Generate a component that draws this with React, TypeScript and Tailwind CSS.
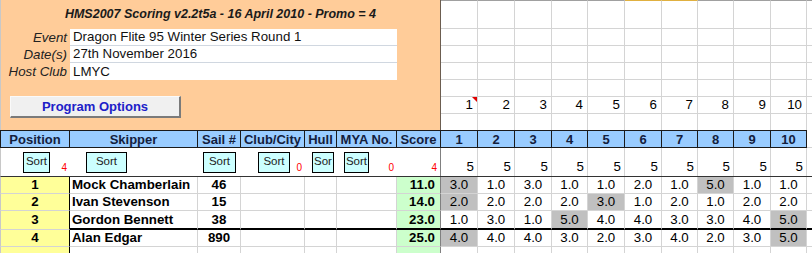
const raceW = ['w-[37px]', 'w-[37px]', 'w-[37px]', 'w-[36px]', 'w-[37px]', 'w-[37px]', 'w-[36px]', 'w-[36px]', 'w-[37px]', 'w-[36px]']

const rows = [
  { pos: 1, name: 'Mock Chamberlain', sail: '46', score: '11.0', r: ['3.0', '1.0', '3.0', '1.0', '1.0', '2.0', '1.0', '5.0', '1.0', '1.0'], gray: [0, 7] },
  { pos: 2, name: 'Ivan Stevenson', sail: '15', score: '14.0', r: ['2.0', '2.0', '2.0', '2.0', '3.0', '1.0', '2.0', '1.0', '2.0', '2.0'], gray: [0, 4] },
  { pos: 3, name: 'Gordon Bennett', sail: '38', score: '23.0', r: ['1.0', '3.0', '1.0', '5.0', '4.0', '4.0', '3.0', '3.0', '4.0', '5.0'], gray: [3, 9] },
  { pos: 4, name: 'Alan Edgar', sail: '890', score: '25.0', r: ['4.0', '4.0', '4.0', '3.0', '2.0', '3.0', '4.0', '2.0', '3.0', '5.0'], gray: [0, 9] },
]

function SortBtn({ w, label = 'Sort' }: { w: string; label?: string }) {
  return (
    <div className={`${w} h-[21px] shrink-0 overflow-hidden whitespace-nowrap border border-black bg-[#ccffff] text-[11.5px] text-[#222] flex items-center justify-center`}>
      {label}
    </div>
  )
}

function Red({ n }: { n: string }) {
  return <span className="ml-auto self-end pb-[3px] pr-[3px] text-[10px] leading-none text-[#ff0000]">{n}</span>
}

function TopGrid() {
  const heights = ['h-[29px]', 'h-[17px]', 'h-[17px]', 'h-[17px]', 'h-[17px]', 'h-[17px]', 'h-[16px]']
  return (
    <div className="flex-1 flex flex-col">
      {heights.map((h, ri) => (
        <div key={ri} className={`flex ${h}`}>
          {raceW.map((w, i) => (
            <div
              key={i}
              className={`${w} relative shrink-0 border-r border-r-[#d4d4d4] ${ri < 6 ? 'border-b border-b-[#d4d4d4]' : ''} ${ri === 0 ? (i === 5 || i === 6 ? 'border-t border-t-[#e0b040]' : 'border-t border-t-[#a0a0a0]') : ''} flex items-center justify-end pr-[4px] text-[13.3px] leading-none`}
            >
              {ri === 5 && i + 1}
              {ri === 5 && i === 0 && (
                <span className="absolute top-0 right-0 w-0 h-0 border-l-[5px] border-l-transparent border-t-[5px] border-t-[#e00000]" />
              )}
            </div>
          ))}
          <div className={`flex-1 ${ri < 6 ? 'border-b border-b-[#d4d4d4]' : ''} ${ri === 0 ? 'border-t border-t-[#a0a0a0]' : ''}`} />
        </div>
      ))}
    </div>
  )
}

function DataRow({ row, thick }: { row: (typeof rows)[number]; thick: boolean }) {
  const bb = thick ? 'border-b-2 border-b-black' : 'border-b border-b-[#d4d4d4]'
  return (
    <div className={`flex ${thick ? 'h-[19px]' : 'h-[17px]'} text-[13.3px] leading-none`}>
      <div className="w-[70px] shrink-0 border-l border-l-[#c8c8c8] border-b border-b-[#d4d4d4] border-r border-r-black bg-[#ffff99] font-bold flex items-center justify-center">
        {row.pos}
      </div>
      <div className={`w-[128px] shrink-0 ${bb} border-r border-r-[#d4d4d4] font-bold flex items-center pl-[2px] whitespace-nowrap`}>
        {row.name}
      </div>
      <div className={`w-[43px] shrink-0 ${bb} border-r border-r-[#d4d4d4] font-bold flex items-center justify-center`}>
        {row.sail}
      </div>
      <div className={`w-[64px] shrink-0 ${bb} border-r border-r-[#d4d4d4]`} />
      <div className={`w-[32px] shrink-0 ${bb} border-r border-r-[#d4d4d4]`} />
      <div className={`w-[60px] shrink-0 ${bb} border-r border-r-[#d4d4d4]`} />
      <div className={`w-[44px] shrink-0 ${bb} border-r border-r-[#808080] bg-[#ccffcc] font-bold flex items-center justify-end pr-[5px]`}>
        {row.score}
      </div>
      {row.r.map((v, i) => (
        <div
          key={i}
          className={`${raceW[i]} shrink-0 ${bb} border-r border-r-[#d4d4d4] ${row.gray.includes(i) ? 'bg-[#c0c0c0]' : ''} flex items-center justify-center`}
        >
          {v}
        </div>
      ))}
      <div className={`flex-1 ${bb}`} />
    </div>
  )
}

export default function App() {
  const heads = [
    { t: 'Position', w: 'w-[70px] border-l' },
    { t: 'Skipper', w: 'w-[128px]' },
    { t: 'Sail #', w: 'w-[43px]' },
    { t: 'Club/City', w: 'w-[64px]' },
    { t: 'Hull', w: 'w-[32px]' },
    { t: 'MYA No.', w: 'w-[60px]' },
    { t: 'Score', w: 'w-[44px]' },
  ]

  return (
    <div className="w-[812px] h-[253px] overflow-hidden bg-white text-black font-['Liberation_Sans',Arial,sans-serif]">
      {/* Top panel */}
      <div className="flex h-[130px]">
        <div className="w-[441px] shrink-0 bg-[#ffcc99] border-l border-l-[#c8c8c8] border-r border-r-[#6b5d50] flex flex-col">
          <div className="h-[29px] flex items-center justify-center text-[12.5px] font-bold italic text-[#1a1a1a]">
            HMS2007 Scoring v2.2t5a - 16 April 2010 - Promo = 4
          </div>
          {[
            ['Event', 'Dragon Flite 95 Winter Series Round 1'],
            ['Date(s)', '27th November 2016'],
            ['Host Club', 'LMYC'],
          ].map(([label, value], i) => (
            <div key={label} className="flex h-[17px] text-[13.3px] leading-none">
              <div className="w-[69px] shrink-0 text-right pr-[3px] italic flex items-center justify-end text-[#222]">{label}</div>
              <div className={`w-[327px] bg-white pl-[3px] flex items-center text-[#111] ${i < 2 ? 'border-b border-b-[#d0d7e0]' : ''}`}>
                {value}
              </div>
            </div>
          ))}
          <button className="mt-[16px] ml-[9px] w-[171px] h-[22px] bg-[#f0f0f0] border-t border-l border-t-[#fafafa] border-l-[#fafafa] border-r-2 border-b-2 border-r-[#7a7a7a] border-b-[#7a7a7a] text-[13px] font-bold text-[#2020c8] flex items-center justify-center">
            Program Options
          </button>
        </div>
        <TopGrid />
      </div>

      {/* Header row */}
      <div className="flex h-[18px] text-[13px] font-bold leading-none text-[#13203d]">
        {heads.map((h) => (
          <div key={h.t} className={`${h.w} shrink-0 bg-[#99ccff] border-y border-r border-[#1a1a1a] flex items-center justify-center whitespace-nowrap`}>
            {h.t}
          </div>
        ))}
        {raceW.map((w, i) => (
          <div key={i} className={`${w} shrink-0 bg-[#99ccff] border-y border-r border-[#1a1a1a] flex items-center justify-center`}>
            {i + 1}
          </div>
        ))}
        <div className="flex-1 border-b border-b-[#d4d4d4]" />
      </div>

      {/* Sort row */}
      <div className="flex h-[29px] border-b border-b-[#333] border-l border-l-[#c8c8c8]">
        <div className="w-[69px] shrink-0 flex items-center pl-[22px]">
          <SortBtn w="w-[27px]" />
          <Red n="4" />
        </div>
        <div className="w-[128px] shrink-0 flex items-center pl-[16px]">
          <SortBtn w="w-[41px]" />
        </div>
        <div className="w-[43px] shrink-0 flex items-center pl-[5px]">
          <SortBtn w="w-[33px]" />
        </div>
        <div className="w-[64px] shrink-0 flex items-center pl-[17px]">
          <SortBtn w="w-[32px]" />
          <Red n="0" />
        </div>
        <div className="w-[32px] shrink-0 flex items-center pl-[7px]">
          <SortBtn w="w-[22px]" label="Sor" />
        </div>
        <div className="w-[60px] shrink-0 flex items-center pl-[7px]">
          <SortBtn w="w-[25px]" />
          <Red n="0" />
        </div>
        <div className="w-[44px] shrink-0 flex border-r border-r-[#808080]">
          <Red n="4" />
        </div>
        {raceW.map((w, i) => (
          <div key={i} className={`${w} shrink-0 border-r border-r-[#d4d4d4] flex items-end justify-end pr-[3px] pb-[3px] text-[13.3px] leading-none`}>
            5
          </div>
        ))}
        <div className="flex-1" />
      </div>

      {/* Results */}
      {rows.map((row, i) => (
        <DataRow key={row.pos} row={row} thick={i === 2} />
      ))}
      <div className="flex h-[10px]">
        <div className="w-[70px] shrink-0 border-l border-l-[#c8c8c8] border-r border-r-black bg-[#ffff99]" />
        <div className="w-[128px] shrink-0 border-r border-r-[#d4d4d4]" />
        <div className="w-[43px] shrink-0 border-r border-r-[#d4d4d4]" />
        <div className="w-[64px] shrink-0 border-r border-r-[#d4d4d4]" />
        <div className="w-[32px] shrink-0 border-r border-r-[#d4d4d4]" />
        <div className="w-[60px] shrink-0 border-r border-r-[#d4d4d4]" />
        <div className="w-[44px] shrink-0 border-r border-r-[#808080] bg-[#ccffcc]" />
        {raceW.map((w, i) => (
          <div key={i} className={`${w} shrink-0 border-r border-r-[#d4d4d4]`} />
        ))}
      </div>
    </div>
  )
}
